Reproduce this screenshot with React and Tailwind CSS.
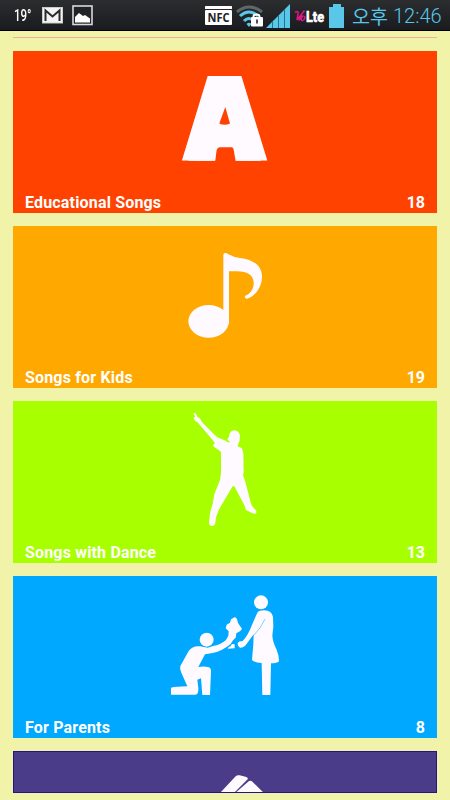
function LetterIcon() {
  return (
    <svg width="110" height="110" viewBox="0 0 110 110" className="overflow-visible" fill="#fffaff">
      <g className="[filter:drop-shadow(6.5px_0_0_#fffaff)_drop-shadow(-6.5px_0_0_#fffaff)]">
        <text
          x="0"
          y="0"
          transform="translate(55 90) scale(0.83 1)"
          textAnchor="middle"
          fontSize="102"
          stroke="#fffaff"
          strokeWidth="12"
          className="font-['Roboto',sans-serif] font-black"
        >
          A
        </text>
      </g>
      <path d="M55.3 42L60 58.5Q54.5 61 49.3 58.5Z" fill="#ff4200" />
      <path d="M50 82.3H62Q63.3 82.3 63.7 85L66 98H45L46.5 86Q47.3 82.3 50 82.3Z" fill="#ff4200" />
    </svg>
  )
}

function NoteIcon() {
  return (
    <svg width="100" height="110" viewBox="0 0 300 330" fill="#fffaff">
      <ellipse cx="101" cy="244" rx="61" ry="49" />
      <path d="M145 43Q149 36 158 41Q173 51 195 54C234 58 260 77 261 107C262 136 247 162 222 174Q212 179 209 171Q209 166 217 164C231 157 237 140 236 127C234 104 217 95 186 94H162V250H145Z" />
    </svg>
  )
}

function DancerIcon() {
  return (
    <svg width="90" height="130" viewBox="0 0 270 390" fill="#fffaff">
      <path d="M40 25Q43 22 48 26L53 37L60 40L65 50L105 91L112 97L132 105L147 113L149 109L142 105L144 99L147 96Q147 78 162 76Q178 77 180 93Q180 108 174 119L173 124L186 130L190 145L191 202L189 211L196 230L211 289L216 303L227 315Q232 322 226 326Q220 328 209 320L197 314L194 302L163 244L158 244L117 313L108 337L106 354Q104 364 93 363Q85 361 88 346L90 324L98 296L103 268L120 225L123 205V141L116 135L103 127L99 121L105 114L96 103L52 51L47 49L42 43L41 37L46 36Z" />
    </svg>
  )
}

function ParentsIcon() {
  return (
    <svg width="130" height="120" viewBox="0 0 390 360" fill="#fffaff">
      <circle cx="303" cy="52" r="21" />
      <path d="M292 83Q297 76 312 76Q336 77 339 96L340 126L337 151Q338 172 350 194Q357 211 357 229Q351 235 333 235L331 330H307L305 234Q282 232 276 225L280 177L281 148L257 181Q249 190 240 188Q232 184 233 175Q236 168 248 168Q266 148 276 119Z" />
      <path d="M315 102Q302 131 281 151" fill="none" stroke="#00a8ff" strokeWidth="1.5" />
      <circle cx="140" cy="164" r="21" />
      <path d="M121 184L143 188L159 183Q181 180 198 165L205 152L206 139L197 130L200 119L210 113L213 103L225 96L231 102L234 114L238 120L246 131L241 138L229 145L227 158L219 166L212 177Q187 198 158 204L135 208L115 246Q130 243 144 246Q154 248 153 260L150 330H127L123 280L112 284L115 310Q116 330 105 329H33V308Q47 305 82 304L64 263Q58 253 61 243L86 198Q98 181 121 184Z" />
      <path d="M216 177L224 178V190L203 191Q204 186 211 184Z" />
    </svg>
  )
}

function BookIcon() {
  return (
    <svg width="100" height="110" viewBox="0 0 300 330" fill="#fffaff">
      <path d="M75 205L137 139Q142 134 149 136L169 141Q175 144 173 148L125 196Z" />
      <path d="M130 194L177 153Q183 150 188 156L240 207H120Z" />
    </svg>
  )
}

const categories = [
  { title: 'Educational Songs', count: 18, bg: 'bg-[#ff4200]', icon: <LetterIcon />, iconPos: 'ml-[157px] mt-[14px]' },
  { title: 'Songs for Kids', count: 19, bg: 'bg-[#ffa800]', icon: <NoteIcon />, iconPos: 'ml-[162px] mt-[14px]' },
  { title: 'Songs with Dance', count: 13, bg: 'bg-[#a8ff00]', icon: <DancerIcon />, iconPos: 'ml-[167px] mt-[4px]' },
  { title: 'For Parents', count: 8, bg: 'bg-[#00a8ff]', icon: <ParentsIcon />, iconPos: 'ml-[147px] mt-[9px]' },
]

function CategoryCard({ title, count, bg, icon, iconPos }) {
  return (
    <div className={`flex h-[162px] shrink-0 flex-col justify-between ${bg}`}>
      <div className={`h-[130px] ${iconPos}`}>{icon}</div>
      <div className="-mt-3 flex h-[21px] shrink-0 justify-between px-3 text-[16px] leading-[21px] font-bold text-white">
        <span className="tracking-[0.17px]">{title}</span>
        <span>{count}</span>
      </div>
    </div>
  )
}

function StatusBar() {
  return (
    <div className="flex h-[31px] shrink-0 items-start border-b border-black bg-linear-to-b from-[#2c2d2f] to-[#191b1e]">
      <div className="ml-[14px] w-[28px] origin-left scale-x-[0.72] pt-[7px] text-[16px] leading-[18px] font-medium text-white">19°</div>
      <svg className="mt-[7px]" width="21" height="17" viewBox="0 0 21 17">
        <rect x="0.5" y="0.5" width="20" height="15.5" fill="#f4f4f4" stroke="#ccc" />
        <path d="M3.5 14V3.5L10.5 9.5L17.5 3.5V14" fill="none" stroke="#2b2b2b" strokeWidth="2" />
      </svg>
      <svg className="mt-[5px] ml-[9px]" width="21" height="21" viewBox="0 0 21 21">
        <rect x="1" y="1" width="19" height="18.5" fill="#222326" stroke="#d8d8e0" strokeWidth="1.6" />
        <path d="M3 17.5V12L7 8L11 11L13 10L18 13.5V17.5Z" fill="#fff" />
      </svg>
      <svg className="mt-[5px] ml-[112px]" width="27" height="21" viewBox="0 0 27 21">
        <rect y="1" width="27" height="3" rx="0.5" fill="#fff" />
        <rect y="5" width="27" height="15" rx="1" fill="#fff" />
        <text x="13.5" y="17.2" fontSize="12.5" textAnchor="middle" textLength="22" lengthAdjust="spacingAndGlyphs" fill="#222326" className="font-['Open_Sans',sans-serif] font-bold">NFC</text>
      </svg>
      <svg className="mt-[5px] ml-[4px]" width="28" height="23" viewBox="0 0 28 23" fill="none">
        <path d="M1 7Q13 -3 26 7" stroke="#62666a" strokeWidth="3" />
        <path d="M4 11Q13 3 22 11M8 16Q13 11 18 16" stroke="#58c7e8" strokeWidth="3" />
        <path d="M10.5 19Q13 16.5 15.5 19L13 22Z" fill="#58c7e8" />
        <path d="M17.5 13V11.5Q17.5 9.5 20.5 9.5T23.5 11.5V13" stroke="#fff" strokeWidth="2" />
        <rect x="15" y="12" width="12" height="9.5" rx="1" fill="#fff" />
        <path d="M21 14.5V18.5" stroke="#222" strokeWidth="1.6" />
      </svg>
      <svg className="mt-[4px] ml-[2px]" width="24" height="24" viewBox="0 0 24 24">
        <path d="M0 24L24 0V24Z" fill="#58c7e8" />
        <path d="M6.5 17V24M12.5 11V24M18.5 5V24" stroke="#28718a" strokeWidth="1" />
      </svg>
      <svg className="mt-[8px] ml-[4px]" width="31" height="18" viewBox="0 0 31 18">
        <path d="M1 4.5Q4 2.5 4.2 5L3 12L10.5 2.5M5 12.5Q7 7.5 8.5 8L7 11.5Q8 14 10.5 11Q11.5 8 9.5 8.5" fill="none" stroke="#df1683" strokeWidth="1.5" />
        <text x="12" y="13.5" fontSize="14" textLength="18" lengthAdjust="spacingAndGlyphs" fill="#fff" stroke="#fff" strokeWidth="0.4" className="font-['Roboto',sans-serif] font-black">Lte</text>
      </svg>
      <svg className="mt-[4px] ml-[4px]" width="16" height="24" viewBox="0 0 16 24" fill="#58c7e8">
        <path d="M4 0H12V3H15V24H0V3H4Z" />
      </svg>
      <div className="ml-[7px] flex pt-[3px] leading-6 whitespace-nowrap text-[#58c7e8]">
        <span className="w-[41px] pt-px font-['Noto_Sans_CJK_KR',sans-serif] text-[19.5px]">오후</span>
        <span className="pt-px text-[20px] font-light">12:46</span>
      </div>
    </div>
  )
}

export default function App() {
  return (
    <div className="flex h-[800px] w-[450px] flex-col overflow-hidden bg-[#f1f3a9] font-['Roboto',sans-serif]">
      <StatusBar />
      <div className="mx-[13px] mt-[6px] mb-[13px] h-px shrink-0 bg-[#f2ad9c]" />
      <div className="mx-[13px] flex flex-col gap-[13px]">
        {categories.map((category) => (
          <CategoryCard key={category.title} {...category} />
        ))}
        <div className="h-[42px] overflow-hidden border border-[#27128a] bg-[#4a3c88]">
          <div className="-mt-[22px] ml-[176px]">
            <BookIcon />
          </div>
        </div>
      </div>
    </div>
  )
}
